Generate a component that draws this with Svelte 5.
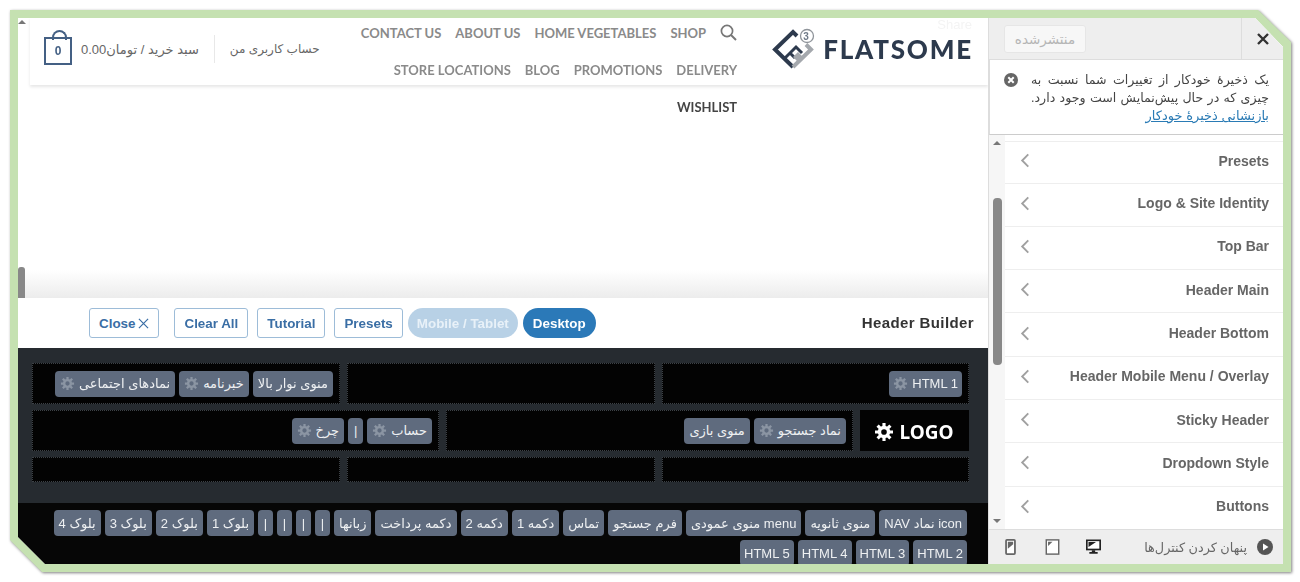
<script lang="ts">
  // Customizer screenshot: preview + header builder on the left, panel on the right
  const navItems = ['CONTACT US', 'ABOUT US', 'HOME VEGETABLES', 'SHOP'];
  const navItems2 = ['STORE LOCATIONS', 'BLOG', 'PROMOTIONS', 'DELIVERY'];

  const sections = [
    'Presets',
    'Logo & Site Identity',
    'Top Bar',
    'Header Main',
    'Header Bottom',
    'Header Mobile Menu / Overlay',
    'Sticky Header',
    'Dropdown Style',
    'Buttons'
  ];

  const buttons = ['Clear All', 'Tutorial', 'Presets'];

  const trayChips = [
    'icon نماد NAV', 'منوی ثانویه', 'menu منوی عمودی', 'فرم جستجو', 'تماس', 'دکمه 1', 'دکمه 2',
    'دکمه پرداخت', 'زبانها', '|', '|', '|', '|', 'بلوک 1', 'بلوک 2', 'بلوک 3', 'بلوک 4',
    'HTML 2', 'HTML 3', 'HTML 4', 'HTML 5'
  ];
</script>

{#snippet gear()}
  <svg class="gear" viewBox="0 0 16 16" aria-hidden="true">
    <circle cx="8" cy="8" r="3.6" fill="none" stroke="currentColor" stroke-width="2.6" />
    <path d="M8 1v3M8 12v3M1 8h3M12 8h3M3 3l2.2 2.2M10.8 10.8 13 13M13 3l-2.2 2.2M5.2 10.8 3 13" stroke="currentColor" stroke-width="2.4" />
  </svg>
{/snippet}

{#snippet chip(label, hasGear = false)}
  <div class="chip" class:html={label.startsWith('HTML')} dir="rtl">
    <span>{label}</span>
    {#if hasGear}{@render gear()}{/if}
  </div>
{/snippet}

<div class="page">
  <div class="frame">
    <div class="inner">
      <div class="main">
        <section class="preview">
          <div class="scroll-up"></div>
          <div class="scroll-thumb"></div>
          <header class="site-header">
            <div class="header-left">
              <div class="cart-icon"><b>0</b></div>
              <span class="cart-text" dir="rtl">سبد خرید / تومان0.00</span>
              <span class="divider"></span>
              <span class="account" dir="rtl">حساب کاربری من</span>
            </div>
            <nav class="nav">
              {#each navItems as item}
                <span>{item}</span>
              {/each}
              <svg class="search" viewBox="0 0 17 17" aria-hidden="true">
                <circle cx="7" cy="7" r="5.6" fill="none" stroke="currentColor" stroke-width="1.7" />
                <path d="m11 11 5 5" stroke="currentColor" stroke-width="2" />
              </svg>
              {#each navItems2 as item}
                <span>{item}</span>
              {/each}
              <span class="wishlist">WISHLIST</span>
            </nav>
            <div class="logo">
              <svg viewBox="0 0 44 44" class="logo-mark" aria-hidden="true">
                <path d="M26 9 22 5 4 22.500 22 40" fill="none" stroke="#2d3a4d" stroke-width="4" />
                <path d="M22 40 40 22.500 35 17.500" fill="none" stroke="#a4a8ad" stroke-width="4" />
                <path d="M14 31 25 20l6 6M19 26l5 5" fill="none" stroke="#2d3a4d" stroke-width="3" />
                <path d="M27 25l5 5-5 5-5-5z" fill="#a4a8ad" />
                <circle cx="36" cy="9" r="6.500" fill="#fff" stroke="#8f949a" stroke-width="1.300" />
                <text x="36" y="12.500" font-size="10" text-anchor="middle" fill="#6f7a88" font-family="Liberation Sans">3</text>
              </svg>
              <span>FLATSOME</span>
            </div>
          </header>
          <span class="ghost">Share</span>
        </section>

        <section class="toolbar">
          <div class="tools">
            <button class="outline close">Close
              <svg viewBox="0 0 12 12" aria-hidden="true"><path d="m1 1 10 10M11 1 1 11" stroke="currentColor" stroke-width="1.300" /></svg>
            </button>
            {#each buttons as b}
              <button class="outline">{b}</button>
            {/each}
            <button class="pill faded">Mobile / Tablet</button>
            <button class="pill active">Desktop</button>
          </div>
          <h2>Header Builder</h2>
        </section>

        <section class="builder">
          <div class="row even">
            <div class="cell">
              {@render chip('منوی نوار بالا')}
              {@render chip('خبرنامه', true)}
              {@render chip('نمادهای اجتماعی', true)}
            </div>
            <div class="cell"></div>
            <div class="cell">
              {@render chip('HTML 1', true)}
            </div>
          </div>
          <div class="row middle">
            <div class="cell">
              {@render chip('حساب', true)}
              {@render chip('|')}
              {@render chip('چرخ', true)}
            </div>
            <div class="cell">
              {@render chip('نماد جستجو', true)}
              {@render chip('منوی بازی')}
            </div>
            <div class="cell logo-cell">
              <svg class="logo-gear" viewBox="0 0 16 16" aria-hidden="true">
                <circle cx="8" cy="8" r="4" fill="none" stroke="#fff" stroke-width="3" />
                <path d="M8 0v4M8 12v4M0 8h4M12 8h4M2.300 2.300l2.800 2.800M10.900 10.900l2.800 2.800M13.700 2.300l-2.800 2.800M5.100 10.900l-2.800 2.800" stroke="#fff" stroke-width="2.800" />
              </svg>
              <span>LOGO</span>
            </div>
          </div>
          <div class="row even short">
            <div class="cell"></div>
            <div class="cell"></div>
            <div class="cell"></div>
          </div>
        </section>

        <section class="tray" dir="rtl">
          {#each trayChips as label}
            {@render chip(label)}
          {/each}
        </section>
      </div>

      <aside class="panel">
        <div class="panel-top">
          <button class="publish">منتشرشده</button>
          <div class="panel-close">
            <svg viewBox="0 0 12 12" aria-hidden="true"><path d="m1 1 10 10M11 1 1 11" stroke="#333" stroke-width="2.400" /></svg>
          </div>
        </div>
        <div class="notice">
          <svg class="dismiss" viewBox="0 0 14 14" aria-hidden="true">
            <circle cx="7" cy="7" r="7" fill="#666" />
            <path d="m4.300 4.300 5.400 5.400M9.700 4.300 4.300 9.700" stroke="#fff" stroke-width="2" />
          </svg>
          <div class="notice-text" dir="rtl">
            <p>یک ذخیرهٔ خودکار از تغییرات شما نسبت به</p>
            <p>چیزی که در حال پیش‌نمایش است وجود دارد.</p>
            <a href="#restore">بازنشانی ذخیرهٔ خودکار</a>
          </div>
        </div>
        <div class="list-wrap">
          <div class="list-bar">
            <i class="arrow up"></i>
            <div class="bar-thumb"></div>
            <i class="arrow down"></i>
          </div>
          <ul class="list">
            {#each sections as s}
              <li>
                <svg viewBox="0 0 10 16" aria-hidden="true"><path d="M8.500 1.500 2 8l6.500 6.500" fill="none" stroke="#a0a0a0" stroke-width="2" /></svg>
                <span>{s}</span>
              </li>
            {/each}
          </ul>
        </div>
        <footer class="panel-foot">
          <div class="devices">
            <svg viewBox="0 0 12 18" aria-hidden="true">
              <rect x="1" y="1" width="10" height="16" rx="1" fill="#fff" stroke="#666" stroke-width="2" />
              <path d="M3 3h6v3l-6 5z" fill="#666" />
            </svg>
            <svg viewBox="0 0 16 18" aria-hidden="true">
              <rect x="1" y="1" width="14" height="16" fill="#fff" stroke="#666" stroke-width="1.600" />
              <path d="M3 3h5l-5 5z" fill="#666" />
            </svg>
            <svg viewBox="0 0 18 18" aria-hidden="true">
              <rect x="1" y="1" width="16" height="11" fill="#fff" stroke="#222" stroke-width="2" />
              <path d="M3 3h9L3 9zM7 13h4v2h3v2H4v-2h3z" fill="#222" />
            </svg>
          </div>
          <span class="hide" dir="rtl">پنهان کردن کنترل‌ها</span>
          <svg class="play" viewBox="0 0 16 16" aria-hidden="true">
            <circle cx="8" cy="8" r="8" fill="#555" />
            <path d="M6 4.500 11.500 8 6 11.500z" fill="#fff" />
          </svg>
        </footer>
      </aside>
    </div>
  </div>
</div>

<style>
  :global(body) {
    margin: 0;
    background: #fff;
  }

  .page {
    width: 1300px;
    height: 582px;
    padding: 10px 0 0 10px;
    box-sizing: border-box;
    overflow: hidden;
    filter: drop-shadow(1px 1px 1.500px rgba(0, 0, 0, 0.5));
    font-family: 'Liberation Sans', 'DejaVu Sans', sans-serif;
  }

  .frame {
    width: 1281px;
    height: 562px;
    padding: 8px;
    box-sizing: border-box;
    background: #c5e1b1;
    clip-path: polygon(0 0, 1248px 0, 1281px 32px, 1281px 562px, 32px 562px, 0 530px);
  }

  .inner {
    display: grid;
    grid-template-columns: 971px 294px;
    height: 546px;
    background: #fff;
    clip-path: polygon(0 0, 1237px 0, 1265px 29px, 1265px 546px, 27px 546px, 0 519px);
  }

  .main {
    display: flex;
    flex-direction: column;
    height: 546px;
    overflow: hidden;
    border-right: 1px solid #ddd;
  }

  /* preview */
  .preview {
    position: relative;
    height: 280px;
    flex: none;
    background: linear-gradient(#fff 90%, #ececec);
  }

  .scroll-up {
    position: absolute;
    left: 0;
    top: 2px;
    border: 4px solid transparent;
    border-top: 0;
    border-bottom: 4px solid #777;
  }

  .scroll-thumb {
    position: absolute;
    left: 0;
    top: 249px;
    width: 7px;
    height: 31px;
    background: #888;
    border-radius: 3px 3px 0 0;
  }

  .ghost {
    position: absolute;
    right: 16px;
    top: -1px;
    font-size: 13px;
    color: #f4f4f4;
  }

  .site-header {
    display: flex;
    height: 67px;
    margin-left: 12px;
    box-shadow: 0 2px 3px rgba(0, 0, 0, 0.1);
    padding-right: 15px;
    box-sizing: border-box;
  }

  .header-left {
    display: flex;
    align-items: center;
    margin-left: 14px;
    height: 62px;
    color: #666;
    font-size: 13px;
  }

  .cart-icon {
    position: relative;
    display: flex;
    align-items: center;
    justify-content: center;
    width: 28px;
    height: 28px;
    margin-top: 3px;
    box-sizing: border-box;
    border: 2px solid #446084;
    color: #446084;
    font-size: 12px;
  }

  .cart-icon::before {
    content: '';
    position: absolute;
    left: 6px;
    top: -9px;
    width: 11px;
    height: 8px;
    border: 2px solid #446084;
    border-bottom: 0;
    border-radius: 8px 8px 0 0;
  }

  .cart-text {
    margin-left: 9px;
  }

  .account {
    font-size: 12px;
  }

  .divider {
    width: 1px;
    height: 28px;
    margin: 0 15px;
    background: #e8e8e8;
  }

  .nav {
    display: flex;
    flex-wrap: wrap;
    align-content: flex-start;
    justify-content: flex-end;
    gap: 19px 14px;
    width: 378px;
    height: 112px;
    margin-left: auto;
    padding-top: 6px;
    font-family: Lato, sans-serif;
    font-size: 13px;
    font-weight: 700;
    line-height: 18px;
    color: #8a8a8a;
  }

  .search {
    width: 17px;
    height: 17px;
    color: #777;
  }

  .wishlist {
    color: #444;
  }

  .logo {
    display: flex;
    align-items: center;
    margin-left: 34px;
    height: 62px;
    font-family: Lato, sans-serif;
    font-size: 26px;
    font-weight: 900;
    letter-spacing: 1.800px;
    color: #2d3a4d;
  }

  .logo-mark {
    width: 44px;
    height: 44px;
    margin-right: 8px;
  }

  /* toolbar */
  .toolbar {
    display: flex;
    justify-content: space-between;
    align-items: center;
    flex: none;
    height: 50px;
    padding: 0 14px 0 71px;
    box-sizing: border-box;
    background: #fff;
  }

  .tools {
    display: flex;
    gap: 9px;
  }

  button {
    font: bold 13.400px 'Liberation Sans', sans-serif;
  }

  .outline {
    height: 30px;
    padding: 0 9px;
    background: #fff;
    color: #3a6ea5;
    border: 1px solid #9dbcd8;
    border-radius: 3px;
  }

  .close {
    display: flex;
    align-items: center;
    gap: 3px;
    margin-right: 6px;
  }

  .close svg {
    width: 11px;
    height: 11px;
  }

  .pill {
    height: 30px;
    padding: 0 9px;
    margin-left: -4px;
    border: 0;
    border-radius: 15px;
    color: #fff;
  }

  .faded {
    background: #b8d1e6;
    color: #e8f1f8;
  }

  .active {
    padding: 0 10px;
    background: #2b79b8;
  }

  h2 {
    margin: 0 0 1px;
    font-size: 15px;
    letter-spacing: 0.400px;
    color: #333;
  }

  /* builder */
  .builder {
    display: flex;
    flex-direction: column;
    gap: 6px;
    flex: none;
    height: 155px;
    padding: 15px 19px 0 14px;
    box-sizing: border-box;
    background: #262b30;
  }

  .row {
    display: grid;
    gap: 7px;
    height: 41px;
  }

  .even {
    grid-template-columns: 308px 308px 307px;
  }

  .middle {
    grid-template-columns: 407px 407px 109px;
  }

  .short {
    height: 25px;
  }

  .cell {
    display: flex;
    flex-direction: row-reverse;
    align-items: center;
    gap: 4px;
    padding: 0 7px;
    background: #030303;
    outline: 1px dotted #3c4146;
    outline-offset: -1px;
    box-sizing: border-box;
    min-width: 0;
  }

  .chip {
    display: flex;
    align-items: center;
    justify-content: center;
    gap: 4px;
    height: 26px;
    min-width: 15px;
    padding: 0 5px;
    box-sizing: border-box;
    flex: none;
    background: #5f6b7e;
    border-radius: 4px;
    color: #eef0f2;
    font-size: 13px;
    white-space: nowrap;
  }

  .chip.html {
    padding: 0 4px;
  }

  .gear {
    width: 15px;
    height: 15px;
    color: #8b95a3;
  }

  .logo-cell {
    flex-direction: row;
    justify-content: center;
    gap: 6px;
    padding-top: 2px;
    font-family: 'Noto Sans', sans-serif;
    font-size: 19px;
    font-weight: 700;
    color: #fff;
    outline: 0;
  }

  .logo-gear {
    width: 18px;
    height: 18px;
  }

  /* tray */
  .tray {
    display: flex;
    flex-wrap: wrap;
    align-content: flex-start;
    gap: 4px;
    flex: 1;
    padding: 7px 21px 0 33px;
    background: #060606;
  }

  /* side panel */
  .panel {
    display: flex;
    flex-direction: column;
    height: 546px;
    background: #fff;
    color: #555;
  }

  .panel-top {
    display: flex;
    justify-content: space-between;
    align-items: center;
    flex: none;
    height: 42px;
    padding-left: 15px;
    background: #eee;
    box-sizing: border-box;
    border-bottom: 1px solid #ddd;
  }

  .publish {
    width: 82px;
    height: 28px;
    padding: 0;
    background: #f7f7f7;
    border: 1px solid #e6e6e6;
    border-radius: 3px;
    color: #b5b5b5;
    font: 13.500px 'DejaVu Sans', sans-serif;
  }

  .panel-close {
    display: flex;
    align-items: center;
    justify-content: center;
    width: 42px;
    height: 100%;
    border-left: 1px solid #ddd;
    box-sizing: border-box;
  }

  .panel-close svg {
    width: 12px;
    height: 12px;
  }

  .notice {
    display: flex;
    flex: none;
    align-items: flex-start;
    gap: 13px;
    height: 75px;
    padding: 11px 14px 0 14px;
    box-sizing: border-box;
    background: #fff;
    border-bottom: 1px solid #ccc;
    border-left: 1px solid #ddd;
  }

  .dismiss {
    width: 14px;
    height: 14px;
    flex: none;
    margin-top: 2px;
  }

  .notice-text {
    flex: 1;
    min-width: 0;
    font-size: 13px;
    line-height: 18px;
  }

  .notice p {
    margin: 0;
    font-size: 12.600px;
    color: #444;
    white-space: nowrap;
    text-align: justify;
    text-align-last: justify;
  }

  .notice a {
    display: block;
    color: #2a7bb5;
  }

  .list-wrap {
    display: flex;
    flex: 1;
    min-height: 0;
  }

  .list-bar {
    display: flex;
    flex-direction: column;
    align-items: center;
    width: 16px;
    flex: none;
    background: #f6f6f6;
  }

  .arrow {
    border: 4px solid transparent;
    width: 0;
  }

  .arrow.up {
    margin-top: 6px;
    border-top: 0;
    border-bottom: 4px solid #777;
  }

  .arrow.down {
    margin-top: auto;
    margin-bottom: 6px;
    border-bottom: 0;
    border-top: 4px solid #777;
  }

  .bar-thumb {
    width: 9px;
    height: 167px;
    margin-top: 53px;
    background: #888;
    border-radius: 4px;
  }

  .list {
    flex: 1;
    margin: 0;
    padding: 6px 0 0;
    list-style: none;
    overflow: hidden;
  }

  .list li {
    display: flex;
    justify-content: space-between;
    align-items: center;
    height: 43.300px;
    padding: 0 14px 3px 15px;
    box-sizing: border-box;
    border-top: 1px solid #eee;
    font-size: 14px;
    font-weight: 700;
    color: #666;
  }

  .list li:first-child {
    height: 41.500px;
  }

  .list svg {
    width: 10px;
    height: 15px;
  }

  .panel-foot {
    display: flex;
    align-items: center;
    flex: none;
    height: 35px;
    padding: 0 10px 0 14px;
    box-sizing: border-box;
    background: #eee;
    border-top: 1px solid #ddd;
  }

  .devices {
    display: flex;
    align-items: center;
    gap: 26.500px;
  }

  .devices svg {
    width: 15px;
    height: 16px;
  }

  .hide {
    margin-left: auto;
    font-size: 12.800px;
    color: #666;
  }

  .play {
    width: 16px;
    height: 16px;
    margin-left: 10px;
  }
</style>
